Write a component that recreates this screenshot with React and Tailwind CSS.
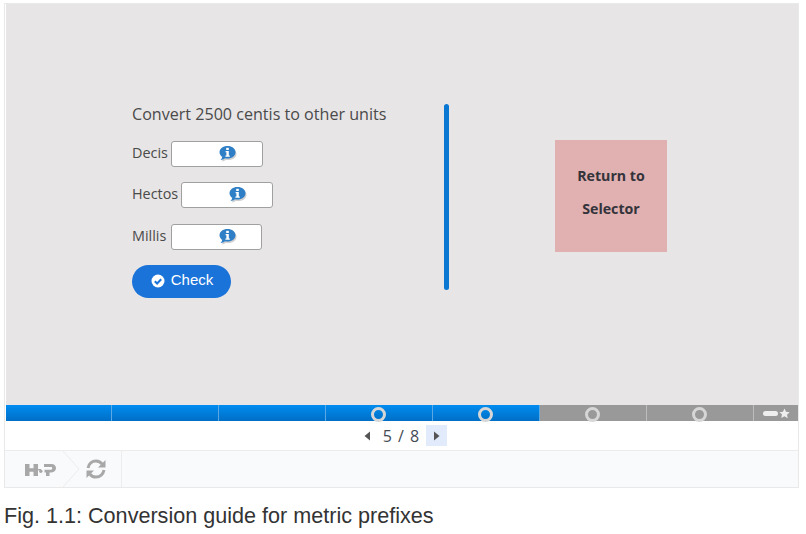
const Info = () => (
  <svg width="20" height="18" viewBox="0 0 20 18" className="block">
    <path d="M10.5 2.5c4.5 0 8 2.6 8 6.2 0 3.6-3.5 6.3-8 6.3-1 0-1.8-.1-2.6-.3-1.1.9-2.6 1.6-4.4 1.8 1-1 1.6-2.1 1.8-3.2-1.7-1.100-2.800-2.700-2.800-4.600 0-3.600 3.500-6.200 8-6.200z" fill="#d0d0d0" />
    <path d="M9.500 1c4.500 0 8 2.600 8 6.200 0 3.600-3.500 6.300-8 6.300-1 0-1.800-.1-2.600-.3-1.100.9-2.600 1.600-4.400 1.800 1-1 1.600-2.100 1.800-3.200C2.600 10.700 1.500 9.100 1.500 7.200 1.500 3.600 5 1 9.500 1z" fill="#2f7fc6" />
    <rect x="8.200" y="2.800" width="2.600" height="2.200" fill="#fff" />
    <path d="M7.600 6h3.200v4.400h1v1.300H7.400v-1.300h1V7.300h-.8z" fill="#fff" />
  </svg>
);

const Field = ({ label, w, gap }) => (
  <div className="flex items-center h-[26px]">
    <span className={`${gap} pb-[2px]`}>{label}</span>
    <div className={`${w} h-full bg-white border border-[#a0a0a0] rounded-[3px] flex items-center justify-center`}>
      <span className="ml-[22px]"><Info /></span>
    </div>
  </div>
);

const Segment = ({ active, ring, first }) => (
  <div className={`${first ? "w-[106px]" : "w-[107px]"} h-full flex items-center justify-center border-r ${active ? "border-[#5aa9e6] bg-gradient-to-b from-[#008cf0] to-[#006fc6]" : "border-[#bdbdbd] bg-[#999999]"}`}>
    {ring && <div className="w-[15px] h-[15px] mt-[2px] mr-[2px] rounded-full border-[3px] border-[#d6d6d6]" />}
  </div>
);

export default function App() {
  return (
    <div className="w-[806px] h-[534px] bg-white overflow-hidden pt-[3px] pl-[4px] font-['Liberation_Sans',sans-serif]">
      <div className="w-[795px] h-[485px] border border-[#e9e9e9] font-['Open_Sans',sans-serif]">
        <div className="h-[401px] ml-[1px] bg-[#e7e5e6] flex text-[#4a4a4a]">
          <div className="w-[438px] pl-[126px] pt-[98px] shrink-0">
            <p className="text-[16.1px] leading-[24px] mb-[15px]">Convert 2500 centis to other units</p>
            <div className="flex flex-col gap-[15.3px] text-[14.4px]">
              <Field label="Decis" w="w-[92px]" gap="mr-[3px]" />
              <Field label="Hectos" w="w-[92px]" gap="mr-[3px]" />
              <Field label="Millis" w="w-[91px]" gap="mr-[5px]" />
            </div>
            <div className="mt-[15px] w-[99px] h-[33px] rounded-full bg-[#1a73d9] text-white text-[15px] flex items-center justify-center gap-[6px] pl-[1px] pb-[1px] font-['Liberation_Sans',sans-serif]">
              <svg width="14" height="14" viewBox="0 0 14 14">
                <circle cx="7" cy="7" r="6.500" fill="#fff" />
                <path d="M3.800 7.200l2.300 2.300 4.100-4.300" fill="none" stroke="#1a73d9" strokeWidth="2" />
              </svg>
              Check
            </div>
          </div>
          <div className="w-[5px] h-[186px] mt-[100px] rounded-full bg-[#0a78d2] shrink-0" />
          <div className="ml-[106px] mt-[136px] w-[112px] h-[112px] bg-[#e1b0b0] flex flex-col items-center justify-center pb-[9px] text-[14.2px] font-bold text-[#33333b] leading-[33px] shrink-0">
            <span>Return to</span>
            <span>Selector</span>
          </div>
        </div>
        <div className="h-[16px] ml-[1px] flex">
          <Segment active first />
          <Segment active />
          <Segment active />
          <Segment active ring />
          <Segment active ring />
          <Segment ring />
          <Segment ring />
          <div className="flex-1 bg-[#999999] flex items-center justify-center gap-[1px]">
            <div className="w-[15px] h-[5px] rounded-full bg-[#eeeeee]" />
            <svg width="11" height="11" viewBox="0 0 24 24" fill="#eeeeee">
              <path d="M12 1l3.400 7.300 7.900 1-5.800 5.400 1.500 7.900L12 17.800l-7 3.800 1.500-7.900L.7 9.300l7.900-1z" />
            </svg>
          </div>
        </div>
        <div className="h-[29px] flex items-center justify-center bg-white text-[16px] text-[#444b55] pl-[8px]">
          <svg width="7" height="10" viewBox="0 0 7 10" className="mr-[12px]"><path d="M6 .5v9L.5 5z" fill="#555555" /></svg>
          <span className="tracking-[1px]">5 / 8</span>
          <div className="ml-[6px] w-[21px] h-[21px] bg-[#e1ebfb] flex items-center justify-center">
            <svg width="7" height="10" viewBox="0 0 7 10"><path d="M1 .5v9L6.500 5z" fill="#555555" /></svg>
          </div>
        </div>
        <div className="h-[37px] border-t border-[#ececec] bg-[#f9fafc] flex items-stretch">
          <div className="w-[58px] flex items-center justify-end pr-[7px] pt-[2px]">
            <svg width="31" height="14" viewBox="0 0 31 14" fill="#a8a8a8">
              <path d="M0 1h4.500v4.300h4V1H13v12H8.500V8.700h-4V13H0z" />
              <rect x="13" y="6" width="3" height="1.300" />
              <circle cx="15.800" cy="8.200" r="1.700" />
              <path fillRule="evenodd" d="M19 1h7.500c2.900 0 4.500 1.700 4.500 4.100s-1.600 4.300-4.500 4.300h-2V13H21V9.400h-1.500V6.700H26c.8 0 1.200-.6 1.200-1.400S26.800 4 26 4h-7z" />
            </svg>
          </div>
          <svg width="18" height="36" viewBox="0 0 18 36" className="shrink-0">
            <path d="M0 0l16 18L0 36" fill="none" stroke="#ececec" />
          </svg>
          <div className="flex items-center pl-[5px] pr-[15px] border-r border-[#ececec]">
            <svg width="20" height="20" viewBox="0 0 20 20" fill="none" stroke="#a8a8a8" strokeWidth="3">
              <path d="M2 9C2.800 4.800 6 2 10 2c2.600 0 4.800 1.100 6.200 3.200" />
              <path d="M18 11c-.8 4.200-4 7-8 7-2.600 0-4.800-1.100-6.200-3.200" />
              <path d="M19.500 1v7.500H12z" fill="#a8a8a8" stroke="none" />
              <path d="M.5 19v-7.500H8z" fill="#a8a8a8" stroke="none" />
            </svg>
          </div>
        </div>
      </div>
      <p className="mt-[16px] text-[21.6px] leading-[23px] text-[#333333]">Fig. 1.1: Conversion guide for metric prefixes</p>
    </div>
  );
}
